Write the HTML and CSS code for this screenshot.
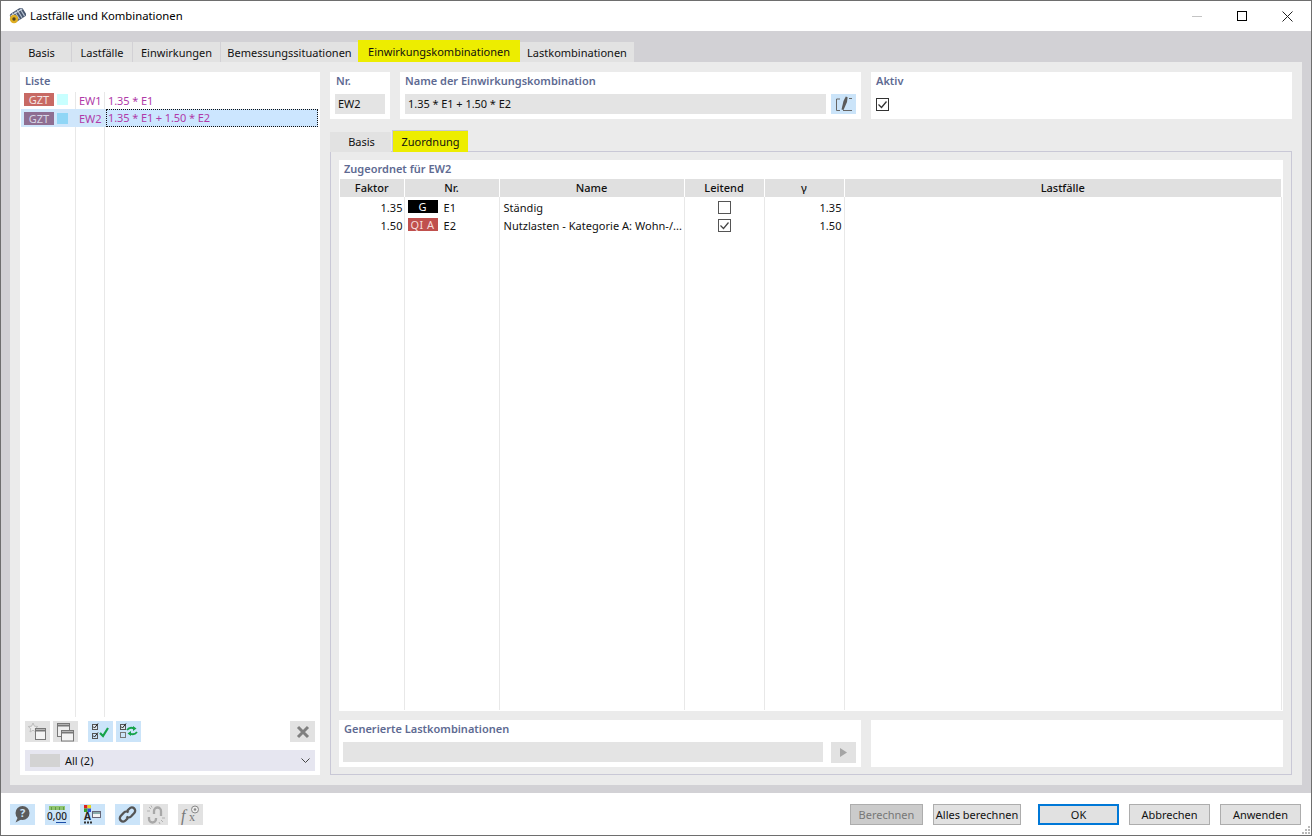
FILE: index.html
```html
<!DOCTYPE html>
<html lang="de">
<head>
<meta charset="utf-8">
<title>Lastfälle und Kombinationen</title>
<link rel="stylesheet" href="styles.css">
</head>
<body>
<div class="window">
  <header class="titlebar">
    <svg class="appicon" width="17" height="16" viewBox="0 0 17 16">
      <g transform="rotate(-32 9 7)"><rect x="1.500" y="2" width="15" height="10" rx="2.500" fill="#47556d"/><path d="M5 2.500v9M8 2.500v9M11 2.500v9M14 2.500v9" stroke="#b4c0d0" stroke-width="1.200"/><path d="M2 4h14" stroke="#d5dde8"/></g>
      <circle cx="5" cy="11" r="4.200" fill="#dfae22"/><circle cx="5" cy="11" r="1.700" fill="#4f4420"/>
    </svg>
    <span class="title">Lastfälle und Kombinationen</span>
    <div class="winctrls">
      <svg width="10" height="10" viewBox="0 0 10 10" class="wc wc-min"><path d="M0 5.500h10" stroke="#c4c4c4"/></svg>
      <svg width="10" height="10" viewBox="0 0 10 10" class="wc wc-max"><rect x=".5" y=".5" width="9" height="9" fill="none" stroke="#000"/></svg>
      <svg width="11" height="11" viewBox="0 0 11 11" class="wc"><path d="M.5.5l10 10M10.500.5l-10 10" stroke="#222"/></svg>
    </div>
  </header>

  <div class="frame">
    <nav class="tabs">
      <span class="tab w61">Basis</span>
      <span class="tab w60">Lastfälle</span>
      <span class="tab w87">Einwirkungen</span>
      <span class="tab w137 tight">Bemessungssituationen</span>
      <span class="tab w162 hot">Einwirkungskombinationen</span>
      <span class="tab w114">Lastkombinationen</span>
    </nav>
    <main class="page">
      <section class="leftpanel">
        <div class="label list-label">Liste</div>
        <div class="list">
          <div class="row">
            <span class="badge gzt1">GZT</span><span class="swatch sw1"></span>
            <span class="ew">EW1</span><span class="formula">1.35 * E1</span>
          </div>
          <div class="row selected">
            <span class="badge gzt2">GZT</span><span class="swatch sw2"></span>
            <span class="ew">EW2</span><span class="formula focus">1.35 * E1 + 1.50 * E2</span>
          </div>
        </div>
        <div class="toolbar">
          <button class="ib grey"><svg width="25" height="21" viewBox="0 0 25 21"><path d="M8 2l1.400 3.200 3.400.3-2.600 2.200.8 3.300L8 9.200 5 11l.8-3.300L3.200 5.500l3.400-.3z" fill="#eee" stroke="#bdbdbd"/><rect x="10.500" y="7.500" width="10" height="11" fill="#f3f3f3" stroke="#777"/><path d="M11 9.500h9" stroke="#777" stroke-width="2"/></svg></button>
          <button class="ib grey"><svg width="25" height="21" viewBox="0 0 25 21"><rect x="4.500" y="2.500" width="12" height="13" fill="#eee" stroke="#777"/><path d="M5 4.500h11" stroke="#777" stroke-width="2"/><rect x="8.500" y="9.500" width="12" height="10.500" fill="#f3f3f3" stroke="#777"/><path d="M9 11.500h11" stroke="#777" stroke-width="2"/></svg></button>
          <button class="ib blue gap-l"><svg width="25" height="21" viewBox="0 0 25 21"><rect x="4.500" y="3.500" width="5" height="5" fill="#dfe8f0" stroke="#555"/><path d="M5 5.500l1.500 1.500L10 2.500M5 14.500L6.500 16 10 11.500" stroke="#222" fill="none"/><rect x="4.500" y="12.500" width="5" height="5" fill="none" stroke="#555"/><path d="M12 12l3 3 5-8" fill="none" stroke="#16a34a" stroke-width="2.200"/></svg></button>
          <button class="ib blue"><svg width="25" height="21" viewBox="0 0 25 21"><rect x="4.500" y="3.500" width="5" height="5" fill="#dfe8f0" stroke="#555"/><path d="M5 5.500l1.500 1.500L10 2.500" stroke="#222" fill="none"/><rect x="4.500" y="11.500" width="5" height="5" fill="none" stroke="#777"/><path d="M11 9c2-2.500 5-2.500 7-1.500" fill="none" stroke="#16a34a" stroke-width="1.800"/><path d="M17 5l3.500 2.500L17 10z" fill="#16a34a"/><path d="M21 11c-2 2.500-5 2.500-7 1.500" fill="none" stroke="#16a34a" stroke-width="1.800"/><path d="M15 10l-3.500 2.500L15 15z" fill="#16a34a"/></svg></button>
          <button class="ib grey push"><svg width="14" height="14" viewBox="0 0 14 14"><path d="M2 2l10 10M12 2L2 12" stroke="#808080" stroke-width="3"/></svg></button>
        </div>
        <div class="dropdown">
          <span class="ddswatch"></span><span class="ddtext">All (2)</span>
          <svg class="ddchev" width="9" height="5" viewBox="0 0 9 5"><path d="M.5.5l4 4 4-4" fill="none" stroke="#444"/></svg>
        </div>
      </section>

      <section class="rightcol">
        <div class="toprow">
          <div class="card c-nr"><div class="label nr-label">Nr.</div><div class="input nr">EW2</div></div>
          <div class="card c-name">
            <div class="label">Name der Einwirkungskombination</div>
            <div class="inputrow">
              <div class="input grow">1.35 * E1 + 1.50 * E2</div>
              <button class="ib blue tall"><svg width="21" height="16" viewBox="0 0 21 16"><path d="M7 3H3.500v11.500H7M10 14.500h9M16 2.500h3" fill="none" stroke="#666"/><path d="M8.500 13.500l2-8.500 2.300-4.500 1.800.8-.6 4.700-3.500 8z" fill="#5a5a5a"/></svg></button>
            </div>
          </div>
          <div class="card c-aktiv"><div class="label">Aktiv</div>
            <span class="check big"><svg width="11" height="11" viewBox="0 0 11 11"><path d="M1.500 5.500l3 3 5-6" fill="none" stroke="#333" stroke-width="1.300"/></svg></span>
          </div>
        </div>

        <nav class="subtabs">
          <span class="tab w61 sub">Basis</span>
          <span class="tab w76 sub hot">Zuordnung</span>
        </nav>

        <div class="subframe">
          <div class="card assign">
            <div class="label assign-label">Zugeordnet für EW2</div>
            <table class="grid">
              <thead>
                <tr><th class="c1">Faktor</th><th class="c2">Nr.</th><th class="c3">Name</th><th class="c4">Leitend</th><th class="c5">γ</th><th class="c6">Lastfälle</th></tr>
              </thead>
              <tbody>
                <tr>
                  <td class="num first">1.35</td>
                  <td class="nrcell"><span class="tag tag-g">G</span>E1</td>
                  <td class="name">Ständig</td>
                  <td class="ctr"><span class="check"></span></td>
                  <td class="num">1.35</td><td></td>
                </tr>
                <tr>
                  <td class="num first">1.50</td>
                  <td class="nrcell"><span class="tag tag-q">QI A</span>E2</td>
                  <td class="name">Nutzlasten - Kategorie A: Wohn-/...</td>
                  <td class="ctr"><span class="check"><svg width="11" height="11" viewBox="0 0 11 11"><path d="M1.500 5.500l3 3 5-6" fill="none" stroke="#444" stroke-width="1.200"/></svg></span></td>
                  <td class="num">1.50</td><td></td>
                </tr>
                <tr class="filler"><td></td><td></td><td></td><td></td><td></td><td></td></tr>
              </tbody>
            </table>
          </div>
          <div class="bottomrow">
            <div class="card c-gen">
              <div class="label">Generierte Lastkombinationen</div>
              <div class="inputrow gen">
                <div class="input grow"></div>
                <button class="ib grey tall2"><svg width="7" height="9" viewBox="0 0 7 9"><path d="M0 0l7 4.500L0 9z" fill="#a5a5a5"/></svg></button>
              </div>
            </div>
            <div class="card c-empty"></div>
          </div>
        </div>
      </section>
    </main>
  </div>

  <footer class="footer">
    <button class="ib blue"><svg width="25" height="21" viewBox="0 0 25 21"><circle cx="12.500" cy="9" r="7" fill="#5b5b5b"/><path d="M8 13l-2.500 5.500L12 15z" fill="#5b5b5b"/><text x="12.500" y="13" class="q">?</text></svg></button>
    <button class="ib blue ml10"><svg width="25" height="21" viewBox="0 0 25 21"><rect x="4" y="2" width="16" height="4" fill="#8fc46e"/><path d="M6.500 3v3M10.500 3v3M14.500 3v3M18.500 3v3" stroke="#5f9a48"/><text x="12" y="16" class="zero">0,00</text><path d="M11 18.500h10" stroke="#1d4fa8"/></svg></button>
    <button class="ib blue ml10"><svg width="25" height="21" viewBox="0 0 25 21"><rect x="4" y="1" width="3.500" height="3.500" fill="#e02020"/><rect x="7.500" y="1" width="3.500" height="3.500" fill="#e8d820"/><rect x="4" y="4.500" width="3.500" height="3.500" fill="#30a030"/><rect x="7.500" y="4.500" width="3.500" height="3.500" fill="#3050d0"/><text x="7.500" y="16" class="aa">A</text><path d="M4 18.500h2M7 18.500h2M10 18.500h2" stroke="#333" stroke-width="2"/><rect x="12.500" y="7.500" width="8" height="6" fill="#f3f3f3" stroke="#667"/><path d="M13 9h7" stroke="#8aa" stroke-width="2"/></svg></button>
    <button class="ib blue ml10"><svg width="25" height="21" viewBox="0 0 25 21"><g fill="none" stroke="#555" stroke-width="2.300"><path d="M12 7l2.500-2.500a3.200 3.200 0 0 1 4.800 4.500L16 12.500a3.200 3.200 0 0 1-4.500 0"/><path d="M13 14l-2.500 2.500a3.200 3.200 0 0 1-4.800-4.500L9 8.500a3.200 3.200 0 0 1 4.500 0"/></g></svg></button>
    <button class="ib grey ml3"><svg width="25" height="21" viewBox="0 0 25 21"><g fill="none" stroke="#a8a8a8" stroke-width="2.300"><path d="M11 10V7a3.500 3.500 0 0 1 7 0v5"/><path d="M13 14v1a3.500 3.500 0 0 1-7 0v-2"/></g><path d="M6 3l2 2M4 7h3M8 1.500l1 2M18 16l2 2M19 14h3M16 18l1 2" stroke="#b0b0b0"/></svg></button>
    <button class="ib grey ml10"><svg width="25" height="21" viewBox="0 0 25 21"><text x="3" y="17" class="fx">f</text><text x="11" y="17" class="fx2">x</text><circle cx="17" cy="5.500" r="3.500" fill="#eee" stroke="#888"/><circle cx="17" cy="5.500" r="1.300" fill="#888"/></svg></button>
    <div class="actions">
      <button class="btn disabled w73">Berechnen</button>
      <button class="btn w88 ml10">Alles berechnen</button>
      <button class="btn primary w81 ml17">OK</button>
      <button class="btn w81 ml10">Abbrechen</button>
      <button class="btn w81 ml10">Anwenden</button>
    </div>
    <svg class="grip" width="10" height="10" viewBox="0 0 10 10"><path d="M7 1h2v2H7zM4 4h2v2H4zM7 4h2v2H7zM1 7h2v2H1zM4 7h2v2H4zM7 7h2v2H7z" fill="#b9b9b9"/></svg>
  </footer>
</div>
</body>
</html>
```

FILE: styles.css
```css
* { box-sizing: border-box; }
html, body { margin: 0; padding: 0; background: #fff; }
body { font-family: "Noto Sans", "Open Sans", "Liberation Sans", sans-serif; font-size: 11px; color: #111; }
button { font: inherit; color: inherit; padding: 0; margin: 0; border: 0; }

.window { width: 1312px; height: 836px; border: 1px solid #6e6e6e; display: flex; flex-direction: column; position: relative; }

.titlebar { height: 30px; flex: none; background: #fff; display: flex; align-items: center; padding-left: 8px; }
.appicon { flex: none; }
.title { margin: 0 0 2px 4px; font-size: 11.3px; color: #000; }
.winctrls { margin-left: auto; display: flex; align-items: center; padding-right: 18px; }
.wc { display: block; margin-left: 35px; }

.frame { flex: 1; min-height: 0; background: #d2d1d5; padding: 9px 9px 8px; display: flex; flex-direction: column; }

.tabs { display: flex; align-items: flex-end; height: 22px; flex: none; }
.tab { height: 20px; background: #e2e2e2; display: flex; align-items: center; justify-content: center; margin-right: 1px; color: #111; flex: none; }
.tab.tight { margin-right: 0; }
.tab.hot { height: 22px; background: #eded00; margin-right: 0; }
.w61 { width: 61px; padding-left: 2px; } .w60 { width: 60px; } .w87 { width: 87px; } .w137 { width: 137px; } .w162 { width: 162px; } .w114 { width: 114px; } .w76 { width: 76px; }

.page { flex: 1; min-height: 0; background: #ebebeb; padding: 10px; display: flex; gap: 10px; }

.label { font-weight: 600; color: #5e6a92; line-height: 15px; padding: 1px 0 0 5px; }
.nr-label { padding-left: 6px; }

.leftpanel { width: 300px; flex: none; background: #fff; display: flex; flex-direction: column; padding-bottom: 4px; }
.list-label { height: 20px; }
.list { flex: 1; min-height: 0; padding-left: 1px;
  background:
    linear-gradient(#e8e8e8, #e8e8e8) 55px 0 / 1px 100% no-repeat,
    linear-gradient(#e8e8e8, #e8e8e8) 84px 0 / 1px 100% no-repeat; }
.row { height: 18px; width: 297px; display: flex; align-items: center; color: #b03aa8; }
.row:first-child { height: 17px; }
.row.selected { background: #cfe6fb; }
.badge { width: 30px; height: 13px; margin-left: 3px; color: #f3e6e6; display: flex; align-items: center; justify-content: center; line-height: 13px; }
.gzt1 { background: #c86a64; margin-bottom: 2px; }
.gzt2 { background: #8e6e92; color: #d6d6e6; }
.swatch { width: 11px; height: 11px; margin-left: 3px; }
.sw1 { background: #c8ffff; margin-bottom: 2px; }
.sw2 { background: #90d6f6; }
.ew { width: 27px; margin-left: 11px; white-space: nowrap; }
.formula { padding-left: 2px; height: 18px; line-height: 17px; flex: 1; letter-spacing: -.1px; }
.formula.focus { outline: 1px dotted #111; outline-offset: -1px; background: #cce6ff; }

.toolbar { display: flex; padding: 4px 5px 0; height: 25px; flex: none; gap: 3px; }
.ib { width: 25px; height: 21px; flex: none; display: flex; align-items: center; justify-content: center; }
.ib.grey { background: #e2e2e2; }
.ib.blue { background: #cbe4f9; }
.gap-l { margin-left: 7px; }
.push { margin-left: auto; }
.dropdown { margin: 8px 5px 0; height: 21px; background: #e6e6f0; display: flex; align-items: center; padding-left: 5px; flex: none; }
.ddswatch { width: 30px; height: 13px; background: #d3d3d3; }
.ddtext { margin-left: 5px; }
.ddchev { margin-left: auto; margin-right: 5px; }

.rightcol { width: 962px; flex: none; display: flex; flex-direction: column; }
.toprow { display: flex; gap: 10px; height: 47px; flex: none; }
.card { background: #fff; }
.c-nr { width: 60px; }
.c-name { width: 461px; }
.c-aktiv { width: 421px; }
.toprow .label { height: 22px; }
.input { height: 20px; background: #e4e4e4; line-height: 20px; padding-left: 3px; letter-spacing: -.05px; }
.input.nr { margin: 0 5px; width: 50px; }
.inputrow { display: flex; padding: 0 5px; gap: 5px; }
.input.grow { flex: 1; min-width: 0; }
.tall { height: 20px; }
.check { display: flex; align-items: center; justify-content: center; width: 13px; height: 13px; border: 1px solid #555; background: #fff; margin: 1px auto 0; }
.check.big { margin: 4px 0 0 5px; border-color: #333; }

.subtabs { display: flex; align-items: flex-end; height: 22px; margin-top: 11px; flex: none; position: relative; z-index: 1; margin-bottom: -1px; }
.tab.sub { height: 20px; padding-bottom: 1px; }
.tab.sub.hot { height: 22px; padding-bottom: 0; border: 1px solid #c9c8d6; border-width: 1px 0 0 1px; }

.subframe { flex: 1; min-height: 0; border: 1px solid #c9c8d6; padding: 8px 8px 7px; display: flex; flex-direction: column; gap: 9px; }
.assign { flex: 1; min-height: 0; display: flex; flex-direction: column; }
.assign-label { height: 19px; }
.grid { border-collapse: collapse; table-layout: fixed; width: 942px; margin-left: 1px; height: 531px; }
.grid th { height: 18px; background: #e0e0e0; font-weight: 500; padding: 0 0 2px; border-right: 1px solid #fff; color: #111; }
.c1 { width: 64px; } .c2 { width: 95px; } .c3 { width: 185px; } .c4 { width: 80px; } .c5 { width: 80px; }
.grid td { height: 18px; padding: 3px 0 0; line-height: 15px; vertical-align: top; border-right: 1px solid #e8e8e8; white-space: nowrap; overflow: hidden; letter-spacing: .03px; }
.grid .filler td { height: auto; padding: 0; }
.grid .num { text-align: right; padding-right: 2px; }
.grid .num.first { padding-right: 1px; }
.grid .name { padding-left: 4px; }
.ctr { text-align: center; }
.grid .nrcell { padding-left: 3px; }
.tag { display: inline-block; width: 30px; height: 13px; line-height: 13px; text-align: center; margin-right: 6px; vertical-align: top; }
.tag-g { background: #000; color: #fff; }
.tag-q { background: #c0504d; color: #f5dcdc; letter-spacing: .5px; }

.bottomrow { display: flex; gap: 10px; height: 47px; flex: none; }
.c-gen { width: 522px; }
.c-empty { width: 412px; }
.c-gen .label { height: 22px; }
.inputrow.gen { padding: 0 5px 0 4px; gap: 8px; }
.tall2 { height: 21px; }

.footer { height: 42px; flex: none; background: #fff; display: flex; align-items: center; padding: 1px 10px 0 9px; position: relative; }
.ml10 { margin-left: 10px; }
.ml3 { margin-left: 3px; }
.ml17 { margin-left: 17px; }
.actions { margin-left: auto; display: flex; }
.btn { height: 21px; background: #e1e1e1; border: 1px solid #adadad; }
.btn.disabled { background: #cbcbcb; color: #777; }
.btn.primary { border: 2px solid #0078d7; }
.w73 { width: 73px; } .w88 { width: 88px; } .w81 { width: 81px; }
.grip { position: absolute; right: 0; bottom: 0; }

.q { font: 700 11px "Noto Sans", sans-serif; fill: #cbe4f9; text-anchor: middle; }
.zero { font: 500 10px "Noto Sans", sans-serif; fill: #222; text-anchor: middle; }
.aa { font: 700 10px "Noto Sans", sans-serif; fill: #222; text-anchor: middle; }
.fx { font: italic 16px "Liberation Serif", serif; fill: #777; }
.fx2 { font: 12px "Liberation Serif", serif; fill: #777; }
```
